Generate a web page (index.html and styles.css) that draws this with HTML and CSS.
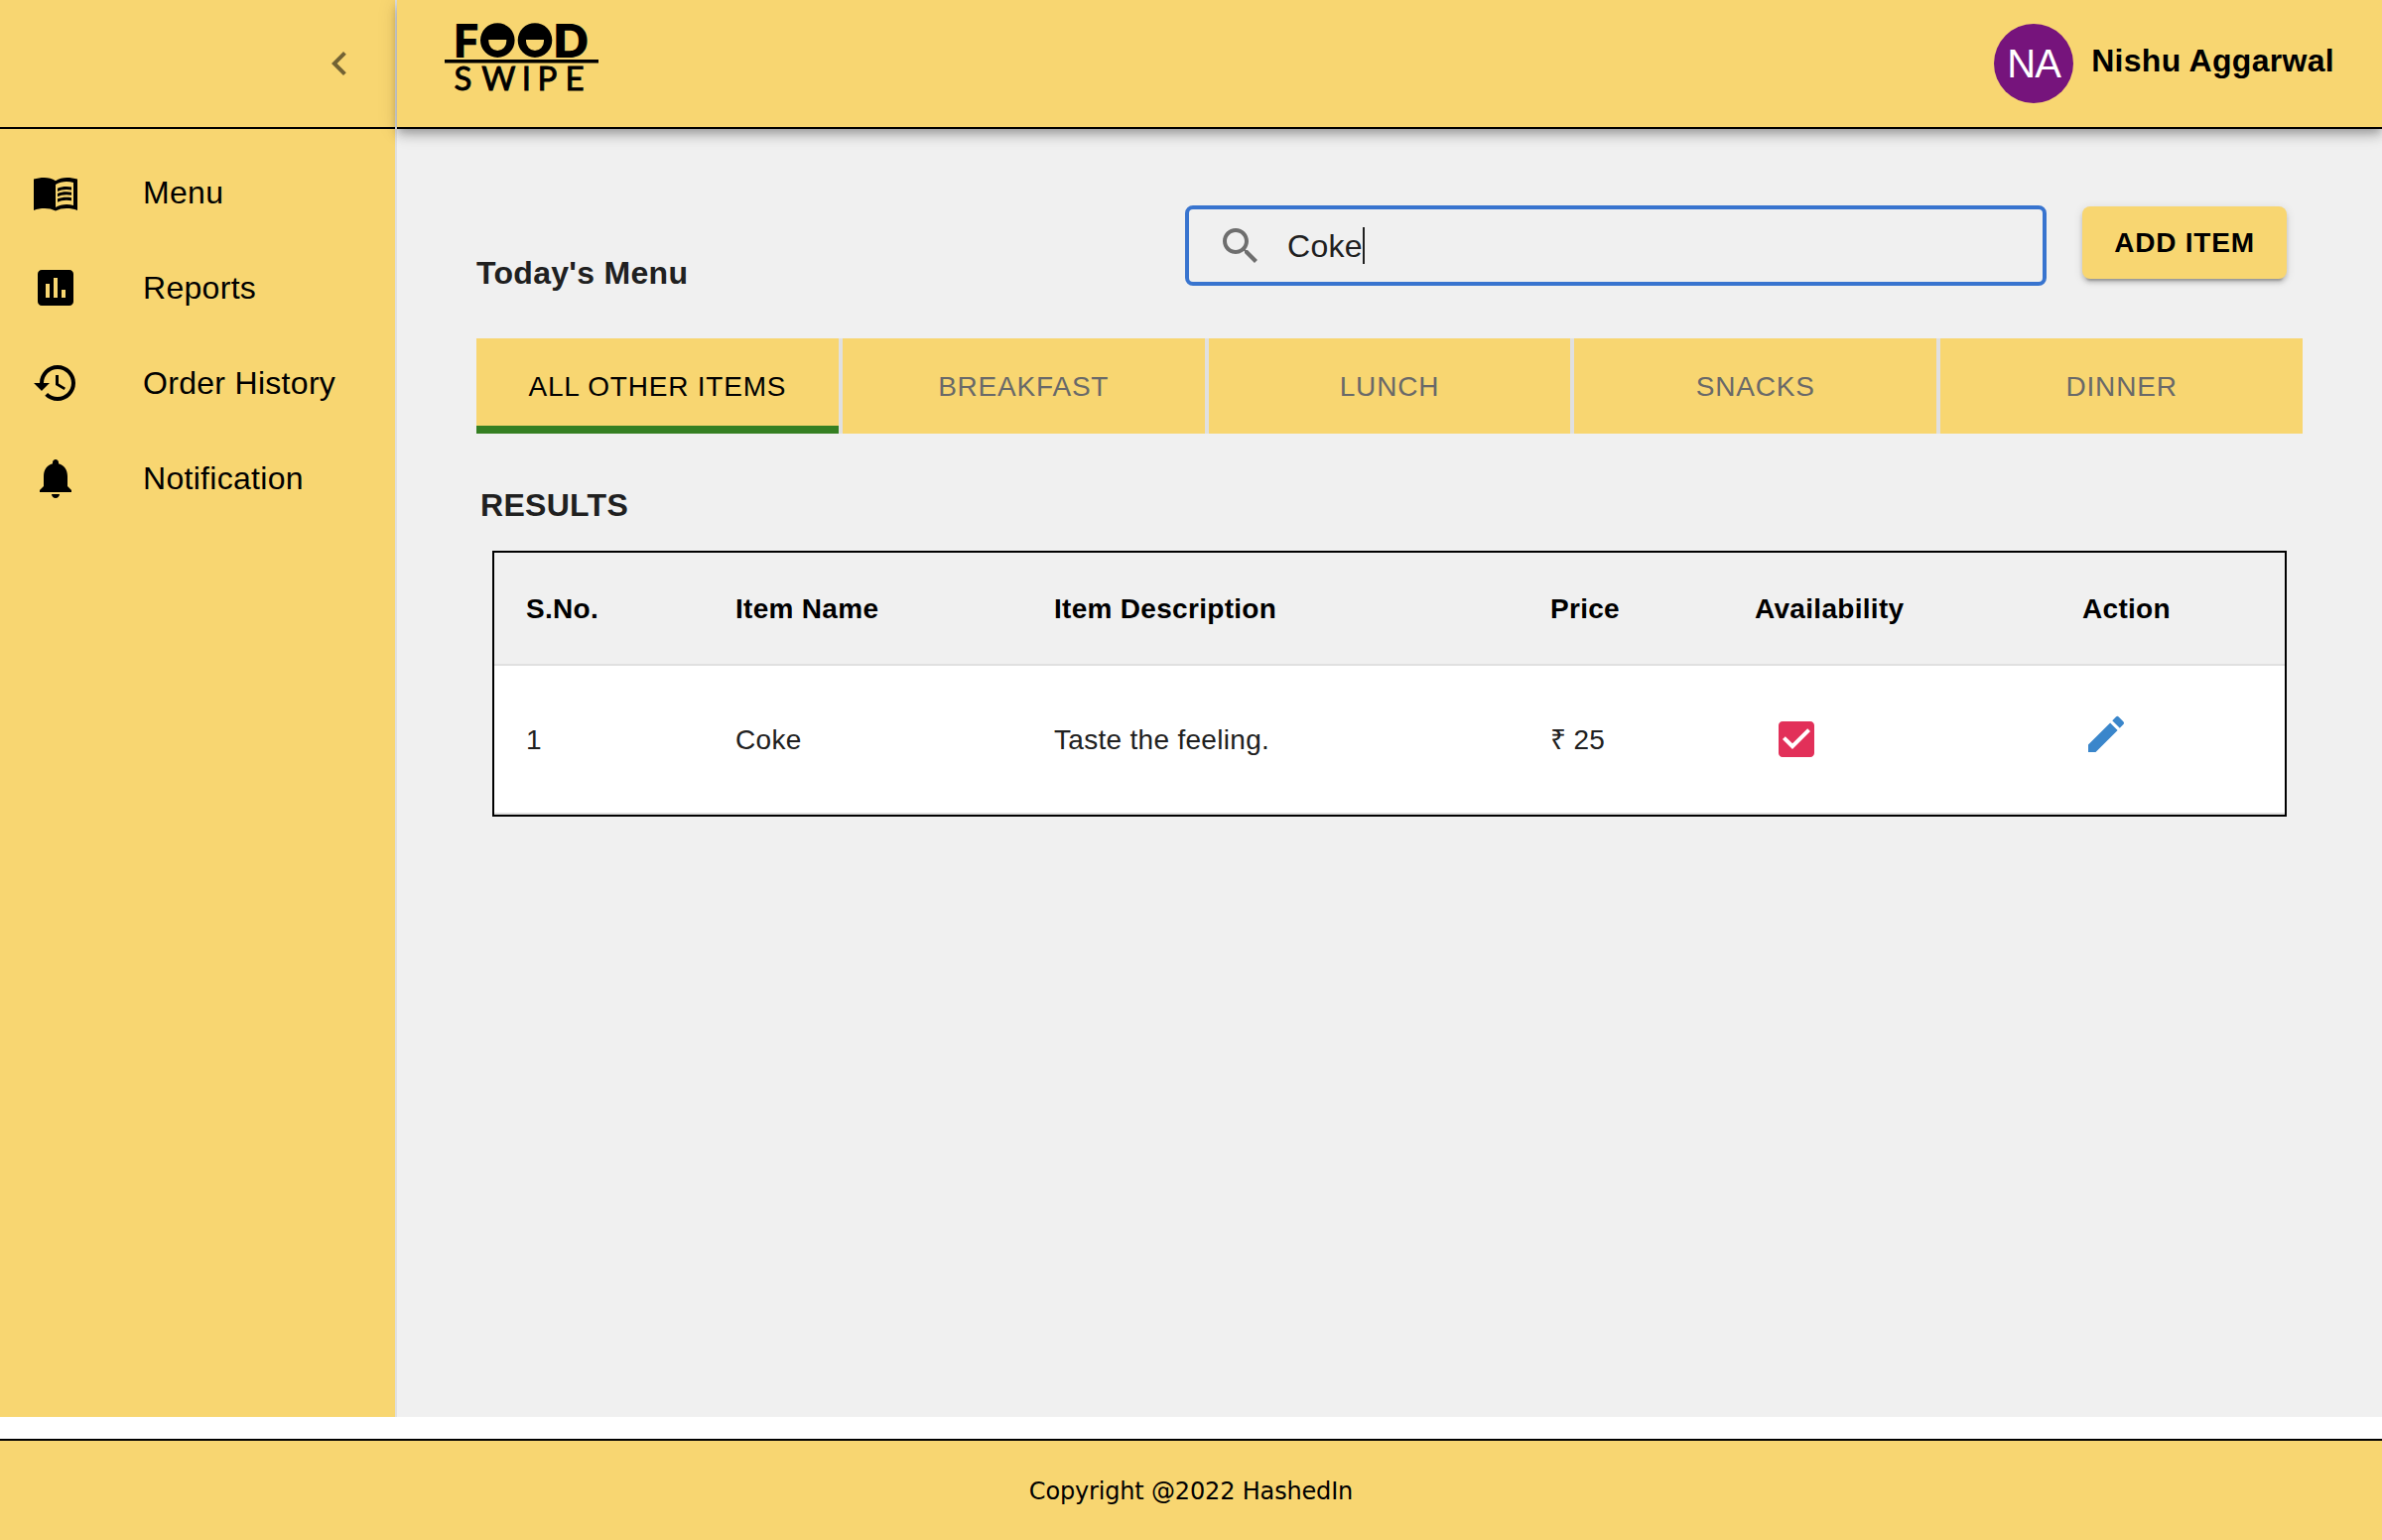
FILE: index.html
```html
<!DOCTYPE html>
<html lang="en">
<head>
<meta charset="utf-8">
<title>Food Swipe</title>
<link rel="stylesheet" href="styles.css">
</head>
<body>
<div class="app">
  <aside class="sidebar">
    <div class="sidebar-head">
      <svg class="icon icon-muted" viewBox="0 0 24 24"><path d="M15.41 7.41L14 6l-6 6 6 6 1.41-1.41L10.83 12z"/></svg>
    </div>
    <nav class="nav">
      <a class="nav-item">
        <svg class="icon" viewBox="0 0 24 24"><path fill-rule="evenodd" d="M12 6.1C10.3 5 8.4 4.5 6.3 4.5 4.5 4.5 2.7 4.75 1 5.3V21c1.8-.7 3.5-1 5.5-1s3.8.4 5.5 1.3c1.7-.9 3.5-1.3 5.5-1.3s3.7.3 5.5 1V5.3c-1.7-.55-3.5-.8-5.3-.8-2.1 0-4 .5-5.7 1.6zM21 18.5c-1.1-.35-2.3-.5-3.5-.5-1.7 0-4.15.65-5.5 1.5V8c1.35-.85 3.8-1.5 5.5-1.5 1.2 0 2.4.15 3.5.5v11.5z"/><path d="M17.5 10.5c.88 0 1.73.09 2.5.26V9.24c-.79-.15-1.64-.24-2.5-.24-1.7 0-3.24.29-4.5.83v1.66c1.13-.64 2.7-.99 4.5-.99zM13 12.49v1.66c1.13-.64 2.7-.99 4.5-.99.88 0 1.73.09 2.5.26V11.9c-.79-.15-1.64-.24-2.5-.24-1.7 0-3.24.3-4.5.83zm4.5 1.84c-1.7 0-3.24.29-4.5.83v1.66c1.13-.64 2.7-.99 4.5-.99.88 0 1.73.09 2.5.26v-1.52c-.79-.16-1.64-.24-2.5-.24z"/></svg>
        <span>Menu</span>
      </a>
      <a class="nav-item">
        <svg class="icon" viewBox="0 0 24 24"><path d="M19 3H5c-1.1 0-2 .9-2 2v14c0 1.1.9 2 2 2h14c1.1 0 2-.9 2-2V5c0-1.1-.9-2-2-2zM9 17H7v-7h2v7zm4 0h-2V7h2v10zm4 0h-2v-4h2v4z"/></svg>
        <span>Reports</span>
      </a>
      <a class="nav-item">
        <svg class="icon" viewBox="0 0 24 24"><path d="M13 3c-4.97 0-9 4.03-9 9H1l3.89 3.89.07.14L9 12H6c0-3.87 3.13-7 7-7s7 3.13 7 7-3.13 7-7 7c-1.93 0-3.68-.79-4.94-2.06l-1.42 1.42C8.27 19.99 10.51 21 13 21c4.97 0 9-4.03 9-9s-4.03-9-9-9zm-1 5v5l4.28 2.54.72-1.21-3.5-2.08V8H12z"/></svg>
        <span>Order History</span>
      </a>
      <a class="nav-item">
        <svg class="icon" viewBox="0 0 24 24"><path d="M12 22c1.1 0 2-.9 2-2h-4c0 1.1.89 2 2 2zm6-6v-5c0-3.07-1.64-5.64-4.5-6.32V4c0-.83-.67-1.5-1.5-1.5s-1.5.67-1.5 1.5v.68C7.63 5.36 6 7.92 6 11v5l-2 2v1h16v-1l-2-2z"/></svg>
        <span>Notification</span>
      </a>
    </nav>
  </aside>

  <div class="page">
    <header class="topbar">
      <svg class="logo" viewBox="0 0 160 100" width="160" height="100">
        <text class="logo-bold" x="9.6" y="45.5" textLength="25" lengthAdjust="spacingAndGlyphs">F</text>
        <path fill-rule="evenodd" d="M53.3 11.3a17.3 17.3 0 1 1 0 34.6 17.3 17.3 0 0 1 0-34.6zM44.3 28.1v1.5a9 9.4 0 0 0 18 0v-1.5z"/>
        <path fill-rule="evenodd" d="M91 11.3a17.3 17.3 0 1 1 0 34.6 17.3 17.3 0 0 1 0-34.6zM82 28.1v1.5a9 9.4 0 0 0 18 0v-1.5z"/>
        <text class="logo-bold" x="109.5" y="45.5" textLength="36" lengthAdjust="spacingAndGlyphs">D</text>
        <rect x="0" y="48" width="155" height="3.5"/>
        <text class="logo-thin" x="9.5 37.2 77.7 93.6 121.5" y="79">SWIPE</text>
      </svg>
      <div class="user">
        <div class="avatar">NA</div>
        <div class="user-name">Nishu Aggarwal</div>
      </div>
    </header>

    <main class="content">
      <div class="toolbar">
        <h1 class="title">Today's Menu</h1>
        <div class="search">
          <svg class="icon icon-muted" viewBox="0 0 24 24"><path d="M15.5 14h-.79l-.28-.27C15.41 12.59 16 11.11 16 9.5 16 5.91 13.09 3 9.5 3S3 5.91 3 9.5 5.91 16 9.5 16c1.61 0 3.09-.59 4.23-1.57l.27.28v.79l5 4.99L20.49 19l-4.99-5zm-6 0C7.01 14 5 11.99 5 9.5S7.01 5 9.5 5 14 7.01 14 9.5 11.99 14 9.5 14z"/></svg>
          <span class="search-text">Coke</span><span class="caret"></span>
        </div>
        <button class="add-button">ADD ITEM</button>
      </div>

      <div class="tabs">
        <div class="tab tab-active">ALL OTHER ITEMS</div>
        <div class="tab">BREAKFAST</div>
        <div class="tab">LUNCH</div>
        <div class="tab">SNACKS</div>
        <div class="tab">DINNER</div>
      </div>

      <h2 class="results-title">RESULTS</h2>

      <div class="table">
        <div class="row row-head">
          <div>S.No.</div><div>Item Name</div><div>Item Description</div><div>Price</div><div>Availability</div><div>Action</div>
        </div>
        <div class="row row-body">
          <div>1</div><div>Coke</div><div>Taste the feeling.</div><div class="cell-price">₹ 25</div>
          <div class="cell-check"><svg class="icon icon-check" viewBox="0 0 24 24"><path d="M19 3H5c-1.11 0-2 .9-2 2v14c0 1.1.89 2 2 2h14c1.11 0 2-.9 2-2V5c0-1.1-.89-2-2-2zm-9 14l-5-5 1.41-1.41L10 14.17l7.59-7.59L19 8l-9 9z"/></svg></div>
          <div class="cell-edit"><svg class="icon icon-edit" viewBox="0 0 24 24"><path d="M3 17.25V21h3.75L17.81 9.94l-3.75-3.75L3 17.25zM20.71 7.04c.39-.39.39-1.02 0-1.41l-2.34-2.34a.9959.9959 0 0 0-1.41 0l-1.83 1.83 3.75 3.75 1.83-1.83z"/></svg></div>
        </div>
      </div>
    </main>
  </div>
</div>
<footer class="footer">Copyright @2022 HashedIn</footer>
</body>
</html>
```
FILE: styles.css
```css
* { box-sizing: border-box; }

body {
  margin: 0;
  height: 1552px;
  display: flex;
  flex-direction: column;
  justify-content: space-between;
  background: #fff;
  color: #202020;
  font-family: "Liberation Sans", Arial, sans-serif;
  font-size: 32px;
  line-height: 48px;
  letter-spacing: 0.3px;
  overflow: hidden;
}

.app { display: flex; height: 1428px; }

.icon { display: block; flex: none; width: 48px; height: 48px; fill: #000; }
.icon-muted { fill: rgba(0, 0, 0, 0.54); }
.icon-check { fill: #e23059; }
.icon-edit { fill: #3a86cb; }

/* Sidebar */
.sidebar {
  flex: none;
  width: 400px;
  background: #f8d671;
  border-right: 2px solid #e0e0e0;
}
.sidebar-head {
  display: flex;
  align-items: center;
  justify-content: flex-end;
  height: 130px;
  padding-right: 32px;
  border-bottom: 2px solid #000;
}
.nav { padding-top: 16px; color: #000; }
.nav-item {
  display: flex;
  align-items: center;
  gap: 64px;
  height: 96px;
  padding-left: 32px;
}

/* Main column */
.page {
  flex: 1;
  display: flex;
  flex-direction: column;
  background: #f0f0f0;
}
.topbar {
  position: relative;
  z-index: 1;
  display: flex;
  align-items: flex-start;
  justify-content: space-between;
  height: 130px;
  padding: 12px 48px 0;
  background: #f8d671;
  border-bottom: 2px solid #000;
  box-shadow: 0 4px 8px -2px rgba(0, 0, 0, 0.2), 0 8px 10px rgba(0, 0, 0, 0.14), 0 2px 20px rgba(0, 0, 0, 0.12);
}
.logo { flex: none; fill: #000; letter-spacing: 0; }
.logo-bold { font-family: Inter, sans-serif; font-size: 46px; font-weight: 800; }
.logo-thin { font-family: Lato, sans-serif; font-size: 33px; font-weight: 400; stroke: #000; stroke-width: 0.9px; }
.user { display: flex; gap: 18px; padding-top: 12px; color: #000; }
.avatar {
  width: 80px;
  height: 80px;
  border-radius: 50%;
  background: #76147c;
  color: #fff;
  font-size: 40px;
  line-height: 80px;
  letter-spacing: -0.8px;
  text-align: center;
}
.user-name { padding-top: 13px; font-weight: bold; white-space: nowrap; }

.content { padding: 77px 80px 0; }
.toolbar { display: flex; align-items: flex-start; height: 134px; }
.title {
  width: 714px;
  margin: 0;
  padding-top: 44px;
  font-size: 32px;
}
.search {
  display: flex;
  align-items: center;
  width: 868px;
  height: 81px;
  padding-left: 28px;
  border: 4px solid #3874cf;
  border-radius: 8px;
}
.search-text { margin-left: 23px; }
.caret { width: 2px; height: 37px; background: #202020; }
.add-button {
  width: 206px;
  height: 73px;
  margin: 1px 0 0 36px;
  padding: 0;
  border: 0;
  border-radius: 8px;
  background: #f8d671;
  color: #000;
  font: bold 28px/49px "Liberation Sans", Arial, sans-serif;
  letter-spacing: 0.8px;
  box-shadow: 0 6px 2px -4px rgba(0, 0, 0, 0.2), 0 4px 4px rgba(0, 0, 0, 0.14), 0 2px 10px rgba(0, 0, 0, 0.12);
}

.tabs {
  display: grid;
  grid-template-columns: repeat(5, 1fr);
  gap: 4px;
  height: 96px;
  background: #e0e0e0;
}
.tab {
  background: #f8d671;
  color: #696969;
  font-size: 28px;
  line-height: 98px;
  letter-spacing: 0.8px;
  height: 96px;
  text-align: center;
}
.tab-active { color: #000; box-shadow: inset 0 -8px #357f22; }

.results-title { margin: 48px 0 22px; padding-left: 4px; font-size: 32px; }

.table { margin: 0 16px; border: 2px solid #000; font-size: 28px; }
.row {
  display: grid;
  grid-template-columns: 211px 321px 500px 206px 330px 1fr;
  align-items: center;
  border-bottom: 2px solid #e0e0e0;
}
.row > div { padding: 2px 0 0 32px; }
.row-head { height: 114px; color: #000; font-weight: bold; }
.row-body { height: 150px; background: #fff; }
.row > .cell-price { word-spacing: -1px; }
.row > .cell-check { padding: 0 0 0 50px; }
.row > .cell-edit { padding: 0 0 10px 32px; }

.footer {
  height: 102px;
  padding-top: 27px;
  border-top: 2px solid #000;
  background: #f8d671;
  color: #000;
  font: 24px/48px "DejaVu Sans", Verdana, sans-serif;
  letter-spacing: -0.17px;
  text-align: center;
}
```
